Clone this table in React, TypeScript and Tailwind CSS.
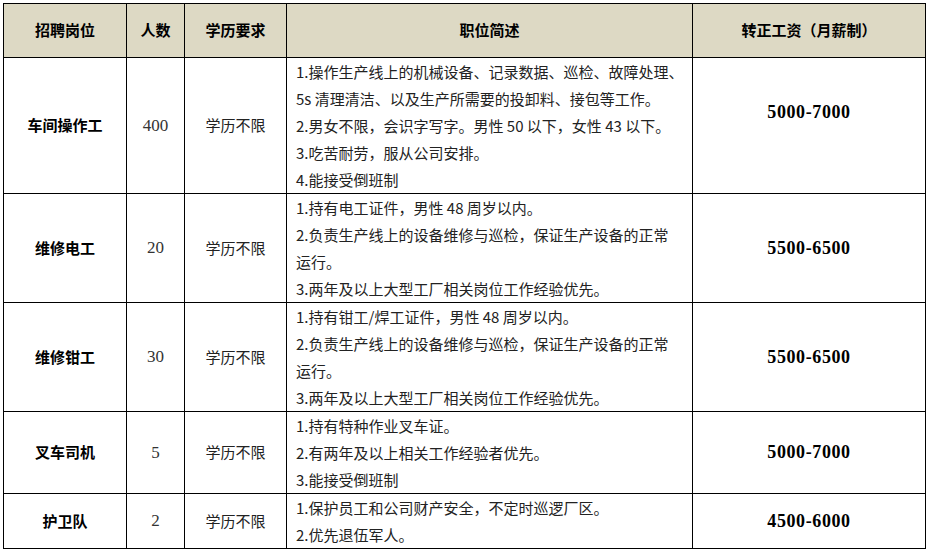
const rows = [
  {
    title: "车间操作工",
    count: "400",
    edu: "学历不限",
    lines: [
      "1.操作生产线上的机械设备、记录数据、巡检、故障处理、",
      "5s 清理清洁、以及生产所需要的投卸料、接包等工作。",
      "2.男女不限，会识字写字。男性 50 以下，女性 43 以下。",
      "3.吃苦耐劳，服从公司安排。",
      "4.能接受倒班制",
    ],
    pay: "5000-7000",
    h: "h-[136px]",
    payPad: "pb-[26px]",
  },
  {
    title: "维修电工",
    count: "20",
    edu: "学历不限",
    lines: [
      "1.持有电工证件，男性 48 周岁以内。",
      "2.负责生产线上的设备维修与巡检，保证生产设备的正常",
      "运行。",
      "3.两年及以上大型工厂相关岗位工作经验优先。",
    ],
    pay: "5500-6500",
    h: "h-[109px]",
    payPad: "",
  },
  {
    title: "维修钳工",
    count: "30",
    edu: "学历不限",
    lines: [
      "1.持有钳工/焊工证件，男性 48 周岁以内。",
      "2.负责生产线上的设备维修与巡检，保证生产设备的正常",
      "运行。",
      "3.两年及以上大型工厂相关岗位工作经验优先。",
    ],
    pay: "5500-6500",
    h: "h-[109px]",
    payPad: "",
  },
  {
    title: "叉车司机",
    count: "5",
    edu: "学历不限",
    lines: [
      "1.持有特种作业叉车证。",
      "2.有两年及以上相关工作经验者优先。",
      "3.能接受倒班制",
    ],
    pay: "5000-7000",
    h: "h-[82px]",
    payPad: "",
  },
  {
    title: "护卫队",
    count: "2",
    edu: "学历不限",
    lines: ["1.保护员工和公司财产安全，不定时巡逻厂区。", "2.优先退伍军人。"],
    pay: "4500-6000",
    h: "h-[55px]",
    payPad: "",
  },
];

const cjk = "font-['Noto_Sans_CJK_SC',sans-serif]";

export default function App() {
  return (
    <div className="w-[927px] h-[553px] bg-white overflow-hidden pt-[3px] pl-[3px]">
      <table className="table-fixed border-collapse w-[922px] text-black">
        <colgroup>
          <col className="w-[123px]" />
          <col className="w-[58px]" />
          <col className="w-[102px]" />
          <col className="w-[406px]" />
          <col className="w-[233px]" />
        </colgroup>
        <thead>
          <tr className={`h-[54px] bg-[#ddd9c4] ${cjk} text-[15px] font-bold`}>
            <th className="border border-black">招聘岗位</th>
            <th className="border border-black">人数</th>
            <th className="border border-black">学历要求</th>
            <th className="border border-black">职位简述</th>
            <th className="border border-black">转正工资（月薪制）</th>
          </tr>
        </thead>
        <tbody>
          {rows.map((r) => (
            <tr key={r.title} className={r.h}>
              <td className={`border border-black text-center ${cjk} text-[15px] font-bold`}>
                {r.title}
              </td>
              <td className="border border-black text-center font-['Liberation_Serif',serif] text-[17px] text-[#333]">
                {r.count}
              </td>
              <td className={`border border-black text-center ${cjk} text-[15px] text-[#222]`}>
                {r.edu}
              </td>
              <td className={`border border-black pl-[9px] pr-1 ${cjk} text-[15px] leading-[27px] text-[#222] whitespace-nowrap`}>
                {r.lines.map((l, i) => (
                  <div key={i}>{l}</div>
                ))}
              </td>
              <td
                className={`border border-black text-center font-['Liberation_Serif',serif] font-bold text-[18px] tracking-[0.6px] ${r.payPad}`}
              >
                {r.pay}
              </td>
            </tr>
          ))}
        </tbody>
      </table>
    </div>
  );
}
